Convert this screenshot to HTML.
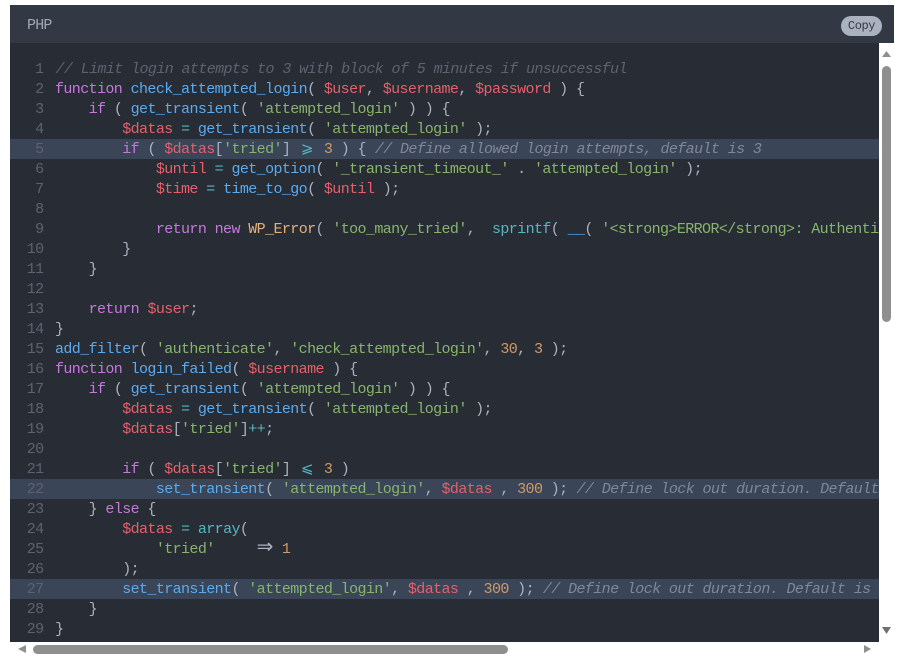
<!DOCTYPE html>
<html>
<head>
<meta charset="utf-8">
<style>
html,body{margin:0;padding:0;width:898px;height:659px;background:#fff;overflow:hidden}
#hdr{position:absolute;left:10px;top:5px;width:884px;height:38px;background:#323844}
#lang{position:absolute;left:27px;top:18px;font:15px/16px "Liberation Mono",monospace;color:#a0a8b4;letter-spacing:-.8px}
#copy{position:absolute;left:841px;top:16px;width:41px;height:20px;border-radius:10px;background:#abb2bf;color:#343842;font:12px/20px "Liberation Mono",monospace;letter-spacing:-.4px;text-align:center}
#body{position:absolute;left:10px;top:43px;width:869px;height:599px;background:#282c34;overflow:hidden}
.l{position:absolute;left:0;width:869px;height:20px;font:15px/20px "Liberation Mono",monospace;letter-spacing:-.6px;color:#abb2bf;white-space:pre}
.h{background:#3a4558}
.n{position:absolute;left:0;top:1px;width:33.5px;text-align:right;color:#5c6370}
.c{position:absolute;left:45px;top:1px}
.k{color:#c678dd}.f{color:#5aabf0}.v{color:#e5606b}.s{color:#87b56d}.m{color:#d19a66}.t{color:#56b6c2}.y{color:#e5b07a}.o{color:#5c6370;font-style:italic;margin-left:.5px}.h .o{color:#7e8899}
.lig{display:inline-block;width:16.8px;text-align:center;font-family:"DejaVu Sans",sans-serif;line-height:1px;letter-spacing:0}
#vb{position:absolute;left:882px;top:66px;width:9px;height:256px;border-radius:5px;background:#8f8f8f}
#hb{position:absolute;left:33px;top:645px;width:475px;height:9px;border-radius:5px;background:#8f8f8f}
svg{position:absolute;left:0;top:0}
</style>
</head>
<body>
<div id="hdr"></div>
<div id="lang">PHP</div>
<div id="copy">Copy</div>
<div id="body">
<div class="l" style="top:16px"><span class="n">1</span><span class="c"><span class="o">// Limit login attempts to 3 with block of 5 minutes if unsuccessful</span></span></div>
<div class="l" style="top:36px"><span class="n">2</span><span class="c"><span class="k">function</span> <span class="f">check_attempted_login</span>( <span class="v">$user</span>, <span class="v">$username</span>, <span class="v">$password</span> ) {</span></div>
<div class="l" style="top:56px"><span class="n">3</span><span class="c">    <span class="k">if</span> ( <span class="f">get_transient</span>( <span class="s">'attempted_login'</span> ) ) {</span></div>
<div class="l" style="top:76px"><span class="n">4</span><span class="c">        <span class="v">$datas</span> <span class="t">=</span> <span class="f">get_transient</span>( <span class="s">'attempted_login'</span> );</span></div>
<div class="l h" style="top:96px"><span class="n">5</span><span class="c">        <span class="k">if</span> ( <span class="v">$datas</span>[<span class="s">'tried'</span>] <span class="lig t">⩾</span> <span class="m">3</span> ) { <span class="o">// Define allowed login attempts, default is 3</span></span></div>
<div class="l" style="top:116px"><span class="n">6</span><span class="c">            <span class="v">$until</span> <span class="t">=</span> <span class="f">get_option</span>( <span class="s">'_transient_timeout_'</span> . <span class="s">'attempted_login'</span> );</span></div>
<div class="l" style="top:136px"><span class="n">7</span><span class="c">            <span class="v">$time</span> <span class="t">=</span> <span class="f">time_to_go</span>( <span class="v">$until</span> );</span></div>
<div class="l" style="top:156px"><span class="n">8</span></div>
<div class="l" style="top:176px"><span class="n">9</span><span class="c">            <span class="k">return</span> <span class="k">new</span> <span class="y">WP_Error</span>( <span class="s">'too_many_tried'</span>,  <span class="t">sprintf</span>( <span class="f">__</span>( <span class="s">'&lt;strong&gt;ERROR&lt;/strong&gt;: Authentication failed</span></span></div>
<div class="l" style="top:196px"><span class="n">10</span><span class="c">        }</span></div>
<div class="l" style="top:216px"><span class="n">11</span><span class="c">    }</span></div>
<div class="l" style="top:236px"><span class="n">12</span></div>
<div class="l" style="top:256px"><span class="n">13</span><span class="c">    <span class="k">return</span> <span class="v">$user</span>;</span></div>
<div class="l" style="top:276px"><span class="n">14</span><span class="c">}</span></div>
<div class="l" style="top:296px"><span class="n">15</span><span class="c"><span class="f">add_filter</span>( <span class="s">'authenticate'</span>, <span class="s">'check_attempted_login'</span>, <span class="m">30</span>, <span class="m">3</span> );</span></div>
<div class="l" style="top:316px"><span class="n">16</span><span class="c"><span class="k">function</span> <span class="f">login_failed</span>( <span class="v">$username</span> ) {</span></div>
<div class="l" style="top:336px"><span class="n">17</span><span class="c">    <span class="k">if</span> ( <span class="f">get_transient</span>( <span class="s">'attempted_login'</span> ) ) {</span></div>
<div class="l" style="top:356px"><span class="n">18</span><span class="c">        <span class="v">$datas</span> <span class="t">=</span> <span class="f">get_transient</span>( <span class="s">'attempted_login'</span> );</span></div>
<div class="l" style="top:376px"><span class="n">19</span><span class="c">        <span class="v">$datas</span>[<span class="s">'tried'</span>]<span class="t">++</span>;</span></div>
<div class="l" style="top:396px"><span class="n">20</span></div>
<div class="l" style="top:416px"><span class="n">21</span><span class="c">        <span class="k">if</span> ( <span class="v">$datas</span>[<span class="s">'tried'</span>] <span class="lig t">⩽</span> <span class="m">3</span> )</span></div>
<div class="l h" style="top:436px"><span class="n">22</span><span class="c">            <span class="f">set_transient</span>( <span class="s">'attempted_login'</span>, <span class="v">$datas</span> , <span class="m">300</span> ); <span class="o">// Define lock out duration. Default is 5 minutes</span></span></div>
<div class="l" style="top:456px"><span class="n">23</span><span class="c">    } <span class="k">else</span> {</span></div>
<div class="l" style="top:476px"><span class="n">24</span><span class="c">        <span class="v">$datas</span> <span class="t">=</span> <span class="t">array</span>(</span></div>
<div class="l" style="top:496px"><span class="n">25</span><span class="c">            <span class="s">'tried'</span>     <span class="lig" style="font-size:20px">⇒</span> <span class="m">1</span></span></div>
<div class="l" style="top:516px"><span class="n">26</span><span class="c">        );</span></div>
<div class="l h" style="top:536px"><span class="n">27</span><span class="c">        <span class="f">set_transient</span>( <span class="s">'attempted_login'</span>, <span class="v">$datas</span> , <span class="m">300</span> ); <span class="o">// Define lock out duration. Default is 5 minutes</span></span></div>
<div class="l" style="top:556px"><span class="n">28</span><span class="c">    }</span></div>
<div class="l" style="top:576px"><span class="n">29</span><span class="c">}</span></div>
</div>
<div id="vb"></div>
<div id="hb"></div>
<svg width="898" height="659">
<polygon points="882,57 891,57 886.500,51" fill="#8f8f8f"/>
<polygon points="882,627 891,627 886.500,634" fill="#707070"/>
<polygon points="26,645 26,653 18,649" fill="#8f8f8f"/>
<polygon points="864,645 864,653 871,649" fill="#8f8f8f"/>
</svg>
</body>
</html>
